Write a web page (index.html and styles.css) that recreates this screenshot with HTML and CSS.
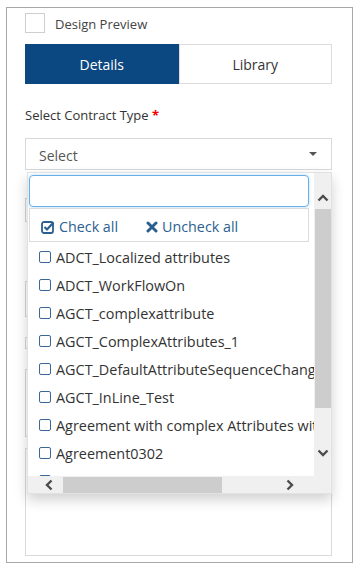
FILE: index.html
```html
<!DOCTYPE html>
<html>
<head>
<meta charset="utf-8">
<link rel="stylesheet" href="styles.css">
</head>
<body>
<div class="panel">
  <div class="preview">
    <span class="box"></span>
    <span class="preview-text">Design Preview</span>
  </div>
  <div class="tabs">
    <div class="tab tab-active">Details</div>
    <div class="tab">Library</div>
  </div>
  <div class="label">Select Contract Type <span class="req">*</span></div>
  <div class="field">
    <div class="select">
      <span>Select</span>
      <span class="caret"></span>
    </div>
    <div class="dropdown">
      <div class="dd-content">
        <div class="search"></div>
        <div class="actions">
          <span class="action">
            <svg class="ico" viewBox="0 0 14 14" width="14" height="14"><rect x="1" y="2" width="11" height="11" rx="2" fill="none" stroke="#2c5f90" stroke-width="1.8"/><polyline points="3.5,7 6,9.5 12.5,2.5" fill="none" stroke="#2c5f90" stroke-width="2.2"/></svg>
            Check all
          </span>
          <span class="action action-un">
            <svg class="ico" viewBox="0 0 12 12" width="12" height="12"><path d="M2 2 L10 10 M10 2 L2 10" stroke="#2c5f90" stroke-width="3" stroke-linecap="round"/></svg>
            Uncheck all
          </span>
        </div>
        <ul class="list">
          <li><span class="cbx"></span>ADCT_Localized attributes</li>
          <li><span class="cbx"></span>ADCT_WorkFlowOn</li>
          <li><span class="cbx"></span>AGCT_complexattribute</li>
          <li><span class="cbx"></span>AGCT_ComplexAttributes_1</li>
          <li><span class="cbx"></span>AGCT_DefaultAttributeSequenceChange</li>
          <li><span class="cbx"></span>AGCT_InLine_Test</li>
          <li><span class="cbx"></span>Agreement with complex Attributes with</li>
          <li><span class="cbx"></span>Agreement0302</li>
          <li><span class="cbx"></span>Agreement0303</li>
        </ul>
      </div>
      <div class="vbar">
        <span class="arrow arrow-up"><svg viewBox="0 0 12 8" width="12" height="8"><polyline points="1.5,6.5 6,2 10.5,6.5" fill="none" stroke="#4d4d4d" stroke-width="2.4"/></svg></span>
        <span class="vthumb"></span>
        <span class="vspace"></span>
        <span class="arrow"><svg viewBox="0 0 12 8" width="12" height="8"><polyline points="1.5,1.5 6,6 10.5,1.5" fill="none" stroke="#4d4d4d" stroke-width="2.4"/></svg></span>
      </div>
      <div class="hbar">
        <span class="harrow"><svg viewBox="0 0 8 12" width="8" height="12"><polyline points="6.5,1.5 2,6 6.5,10.5" fill="none" stroke="#4d4d4d" stroke-width="2.4"/></svg></span>
        <span class="hthumb"></span>
        <span class="hspace"></span>
        <span class="harrow"><svg viewBox="0 0 8 12" width="8" height="12"><polyline points="1.5,1.5 6,6 1.5,10.5" fill="none" stroke="#4d4d4d" stroke-width="2.4"/></svg></span>
      </div>
    </div>
  </div>
  <div class="bg bg-a"></div>
  <div class="bg bg-b"></div>
  <div class="bg bg-c"></div>
  <div class="bg bg-d"></div>
  <div class="bg bg-e"></div>
</div>
</body>
</html>
```
FILE: styles.css
```css
* { box-sizing: border-box; }
html, body { margin: 0; padding: 0; background: #fff; }
body {
  font-family: "Open Sans", "Noto Sans", sans-serif;
  font-size: 13px;
  color: #333;
}
.panel {
  margin: 7px 0 0 6px;
  width: 347px;
  border: 1px solid #a8a8a8;
  padding: 5px 20px 6px 18px;
}
.preview {
  display: flex;
  align-items: center;
  height: 20px;
}
.box {
  width: 20px;
  height: 20px;
  border: 1px solid #cfcfcf;
}
.preview-text { margin-left: 10px; color: #444; padding-top: 2px; }
.tabs {
  display: grid;
  grid-template-columns: 1fr 1fr;
  margin-top: 11px;
  height: 40px;
}
.tab {
  display: flex;
  align-items: center;
  justify-content: center;
  border: 1px solid #dcdcdc;
  font-size: 14px;
  color: #333;
  padding-top: 1px;
}
.tab-active {
  background: #0b4780;
  border-color: #0b4780;
  color: #fff;
}
.label {
  margin-top: 21px;
  line-height: 20px;
  color: #333;
}
.req { color: #e00; font-weight: bold; }
.field { position: relative; margin-top: 13px; }
.select {
  height: 32px;
  border: 1px solid #d9d9d9;
  display: flex;
  align-items: center;
  justify-content: space-between;
  padding: 3px 14px 0 13px;
  font-size: 14px;
  color: #555;
}
.caret {
  width: 0;
  height: 0;
  border-left: 4px solid transparent;
  border-right: 4px solid transparent;
  border-top: 4px solid #555;
  margin-top: -3px;
}
.dropdown {
  position: absolute;
  left: 2px;
  top: calc(100% + 2px);
  width: 305px;
  height: 322px;
  background: #fff;
  border: 1px solid #e2e2e2;
  box-shadow: 0 6px 12px rgba(0, 0, 0, 0.18);
  display: grid;
  grid-template-columns: 1fr 17px;
  grid-template-rows: 1fr 17px;
  z-index: 2;
}
.dd-content {
  overflow: hidden;
  padding: 2px 0 0 1px;
  white-space: nowrap;
}
.search {
  width: 280px;
  height: 32px;
  border: 1px solid #66afe9;
  border-radius: 4px;
  box-shadow: 0 0 3px rgba(102, 175, 233, 0.5);
}
.actions {
  width: 280px;
  height: 34px;
  margin-top: 1px;
  border: 1px solid #dcdcdc;
  display: flex;
  align-items: center;
  padding: 3px 0 0 11px;
  font-size: 14.3px;
  color: #2c5f90;
}
.action { display: flex; align-items: center; gap: 4px; }
.action-un { margin-left: 28px; }
.ico { display: block; }
.list {
  list-style: none;
  margin: 1px 0 0 0;
  padding: 0;
}
.list li {
  height: 28px;
  display: flex;
  align-items: center;
  padding-left: 10px;
  font-size: 14.4px;
  color: #333;
}
.cbx {
  width: 12px;
  height: 12px;
  border: 1.5px solid #3a6898;
  border-radius: 2px;
  margin-right: 5px;
  flex: none;
}
.vbar {
  background: #f0f0f0;
  display: flex;
  flex-direction: column;
  align-items: center;
}
.arrow {
  height: 17px;
  display: flex;
  align-items: center;
  justify-content: center;
  flex: none;
}
.arrow-up { margin-top: 16px; margin-bottom: 3px; }
.vthumb { width: 16px; height: 199px; background: #cdcdcd; flex: none; }
.vspace { height: 36px; flex: none; }
.hbar {
  grid-column: 1 / 3;
  background: #f0f0f0;
  display: flex;
  align-items: center;
  padding-left: 12px;
}
.harrow {
  width: 17px;
  height: 17px;
  display: flex;
  align-items: center;
  justify-content: center;
  flex: none;
}
.hthumb { width: 159px; height: 16px; margin-left: 6px; background: #cdcdcd; flex: none; }
.hspace { width: 59px; flex: none; }
.bg { border: 1px solid #d4d4d4; }
.bg-a { margin-top: 28px; height: 24px; }
.bg-b { margin-top: 59px; height: 36px; }
.bg-c { margin-top: 20px; height: 12px; }
.bg-d { margin-top: 20px; height: 68px; }
.bg-e { margin-top: 11px; height: 108px; border-color: #dadada; }
```
